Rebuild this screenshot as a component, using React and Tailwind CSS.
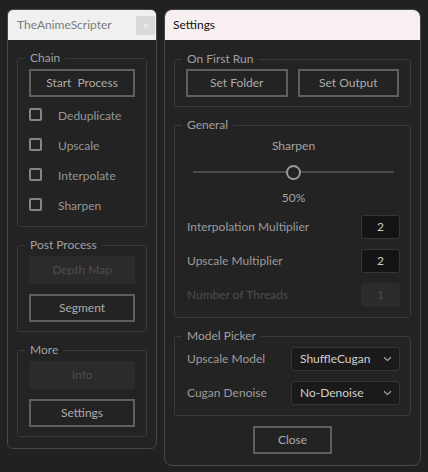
import React from 'react'

const font = { fontFamily: 'Lato, "Noto Sans", sans-serif' }

const Group = ({ title, className = '', children }) => (
  <fieldset className="border border-[#3a3a3a] rounded-[3px]">
    <legend className="ml-[7px] px-[5px] text-[12px] leading-[16px] text-[#a0a0a0]">{title}</legend>
    <div className={className}>{children}</div>
  </fieldset>
)

const Button = ({ children, disabled, className = '' }) =>
  disabled ? (
    <div className={`h-[28px] flex items-center justify-center bg-[#2b2b2b] text-[#4d4d4d] text-[12px] ${className}`}>
      {children}
    </div>
  ) : (
    <div className={`h-[28px] flex items-center justify-center border-2 border-[#5f5f5f] text-[#ababab] text-[12px] ${className}`}>
      {children}
    </div>
  )

const Check = ({ label }) => (
  <div className="h-[30px] flex items-center">
    <div className="w-[13px] h-[13px] border-2 border-[#858585] rounded-[2px]" />
    <span className="ml-[16px] pt-[3px] text-[12px] text-[#969696]">{label}</span>
  </div>
)

const NumberBox = ({ value, disabled }) => (
  <div
    className={`w-[39px] h-[24px] flex items-center justify-center rounded-[3px] text-[12px] ${
      disabled ? 'bg-[#2b2b2b] text-[#4d4d4d]' : 'bg-[#141414] border border-[#363636] text-[#cfcfcf]'
    }`}
  >
    {value}
  </div>
)

const Select = ({ value }) => (
  <div className="w-[109px] h-[24px] flex items-center justify-between pl-[8px] pr-[7px] bg-[#1a1a1a] border border-[#363636] rounded-[3px]">
    <span className="text-[12px] text-[#d0d0d0]">{value}</span>
    <svg width="9" height="6" viewBox="0 0 9 6" fill="none">
      <path d="M1 1.2 L4.5 4.5 L8 1.2" stroke="#a0a0a0" strokeWidth="1.2" />
    </svg>
  </div>
)

export default function App() {
  return (
    <div className="w-[428px] h-[472px] bg-[#212121] flex items-start pl-[7px] pt-[9px] gap-[7px]" style={font}>
      {/* Left panel */}
      <div className="w-[150px] h-[440px] border border-[#474747] rounded-[6px] bg-[#232323] flex flex-col overflow-hidden">
        <div className="h-[30px] bg-[#f0f0f0] flex items-center justify-between pl-[9px] pr-[1px]">
          <span className="text-[12px] text-[#7c7c7c]">TheAnimeScripter</span>
          <div className="w-[19px] h-[19px] bg-[#d9d9d9] flex items-center justify-center text-[10px] leading-none text-[#f4f4f4]">x</div>
        </div>
        <div className="flex flex-col gap-[10px] pt-[10px] px-[9px]">
          <Group title="Chain" className="px-[11px] pt-[3px] pb-[7px]">
            <Button>Start&nbsp; Process</Button>
            <div className="mt-[2px]">
              <Check label="Deduplicate" />
              <Check label="Upscale" />
              <Check label="Interpolate" />
              <Check label="Sharpen" />
            </div>
          </Group>
          <Group title="Post Process" className="px-[11px] pt-[3px] pb-[9px] flex flex-col gap-[10px]">
            <Button disabled>Depth Map</Button>
            <Button>Segment</Button>
          </Group>
          <Group title="More" className="px-[11px] pt-[3px] pb-[9px] flex flex-col gap-[10px]">
            <Button disabled>Info</Button>
            <Button>Settings</Button>
          </Group>
        </div>
      </div>

      {/* Settings panel */}
      <div className="w-[257px] h-[457px] border border-[#474747] rounded-[8px] bg-[#232323] flex flex-col overflow-hidden">
        <div className="h-[30px] bg-[#f8f0f0] flex items-center pl-[8px]">
          <span className="text-[12px] text-[#111]">Settings</span>
        </div>
        <div className="flex flex-col gap-[10px] pt-[11px] px-[9px]">
          <Group title="On First Run" className="px-[11px] pt-[2px] pb-[9px]">
            <div className="grid grid-cols-2 gap-[10px]">
              <Button>Set Folder</Button>
              <Button>Set Output</Button>
            </div>
          </Group>
          <Group title="General" className="pl-[12px] pr-[10px] pb-[10px]">
            <div className="flex flex-col items-center">
              <span className="mt-[5px] text-[12px] leading-[16px] text-[#a3a3a3]">Sharpen</span>
              <div className="w-full h-[36px] flex items-center pl-[6px] pr-[6px]">
                <div className="flex-1 h-[2px] bg-[#4a4a4a]" />
                <div className="w-[15px] h-[15px] rounded-full border-2 border-[#999] bg-[#232323]" />
                <div className="flex-1 h-[2px] bg-[#4a4a4a]" />
              </div>
              <span className="text-[12px] leading-[16px] text-[#a3a3a3]">50%</span>
            </div>
            <div className="mt-[9px] flex flex-col gap-[10px]">
              <div className="flex items-center justify-between">
                <span className="text-[12px] text-[#9c9c9c]">Interpolation Multiplier</span>
                <NumberBox value="2" />
              </div>
              <div className="flex items-center justify-between">
                <span className="text-[12px] text-[#9c9c9c]">Upscale Multiplier</span>
                <NumberBox value="2" />
              </div>
              <div className="flex items-center justify-between">
                <span className="text-[12px] text-[#4d4d4d]">Number of Threads</span>
                <NumberBox value="1" disabled />
              </div>
            </div>
          </Group>
          <Group title="Model Picker" className="pl-[12px] pr-[10px] pt-[3px] pb-[10px] flex flex-col gap-[10px]">
            <div className="flex items-center justify-between">
              <span className="text-[12px] text-[#9c9c9c]">Upscale Model</span>
              <Select value="ShuffleCugan" />
            </div>
            <div className="flex items-center justify-between">
              <span className="text-[12px] text-[#9c9c9c]">Cugan Denoise</span>
              <Select value="No-Denoise" />
            </div>
          </Group>
          <div className="flex justify-center">
            <Button className="w-[79px]">Close</Button>
          </div>
        </div>
      </div>
    </div>
  )
}
